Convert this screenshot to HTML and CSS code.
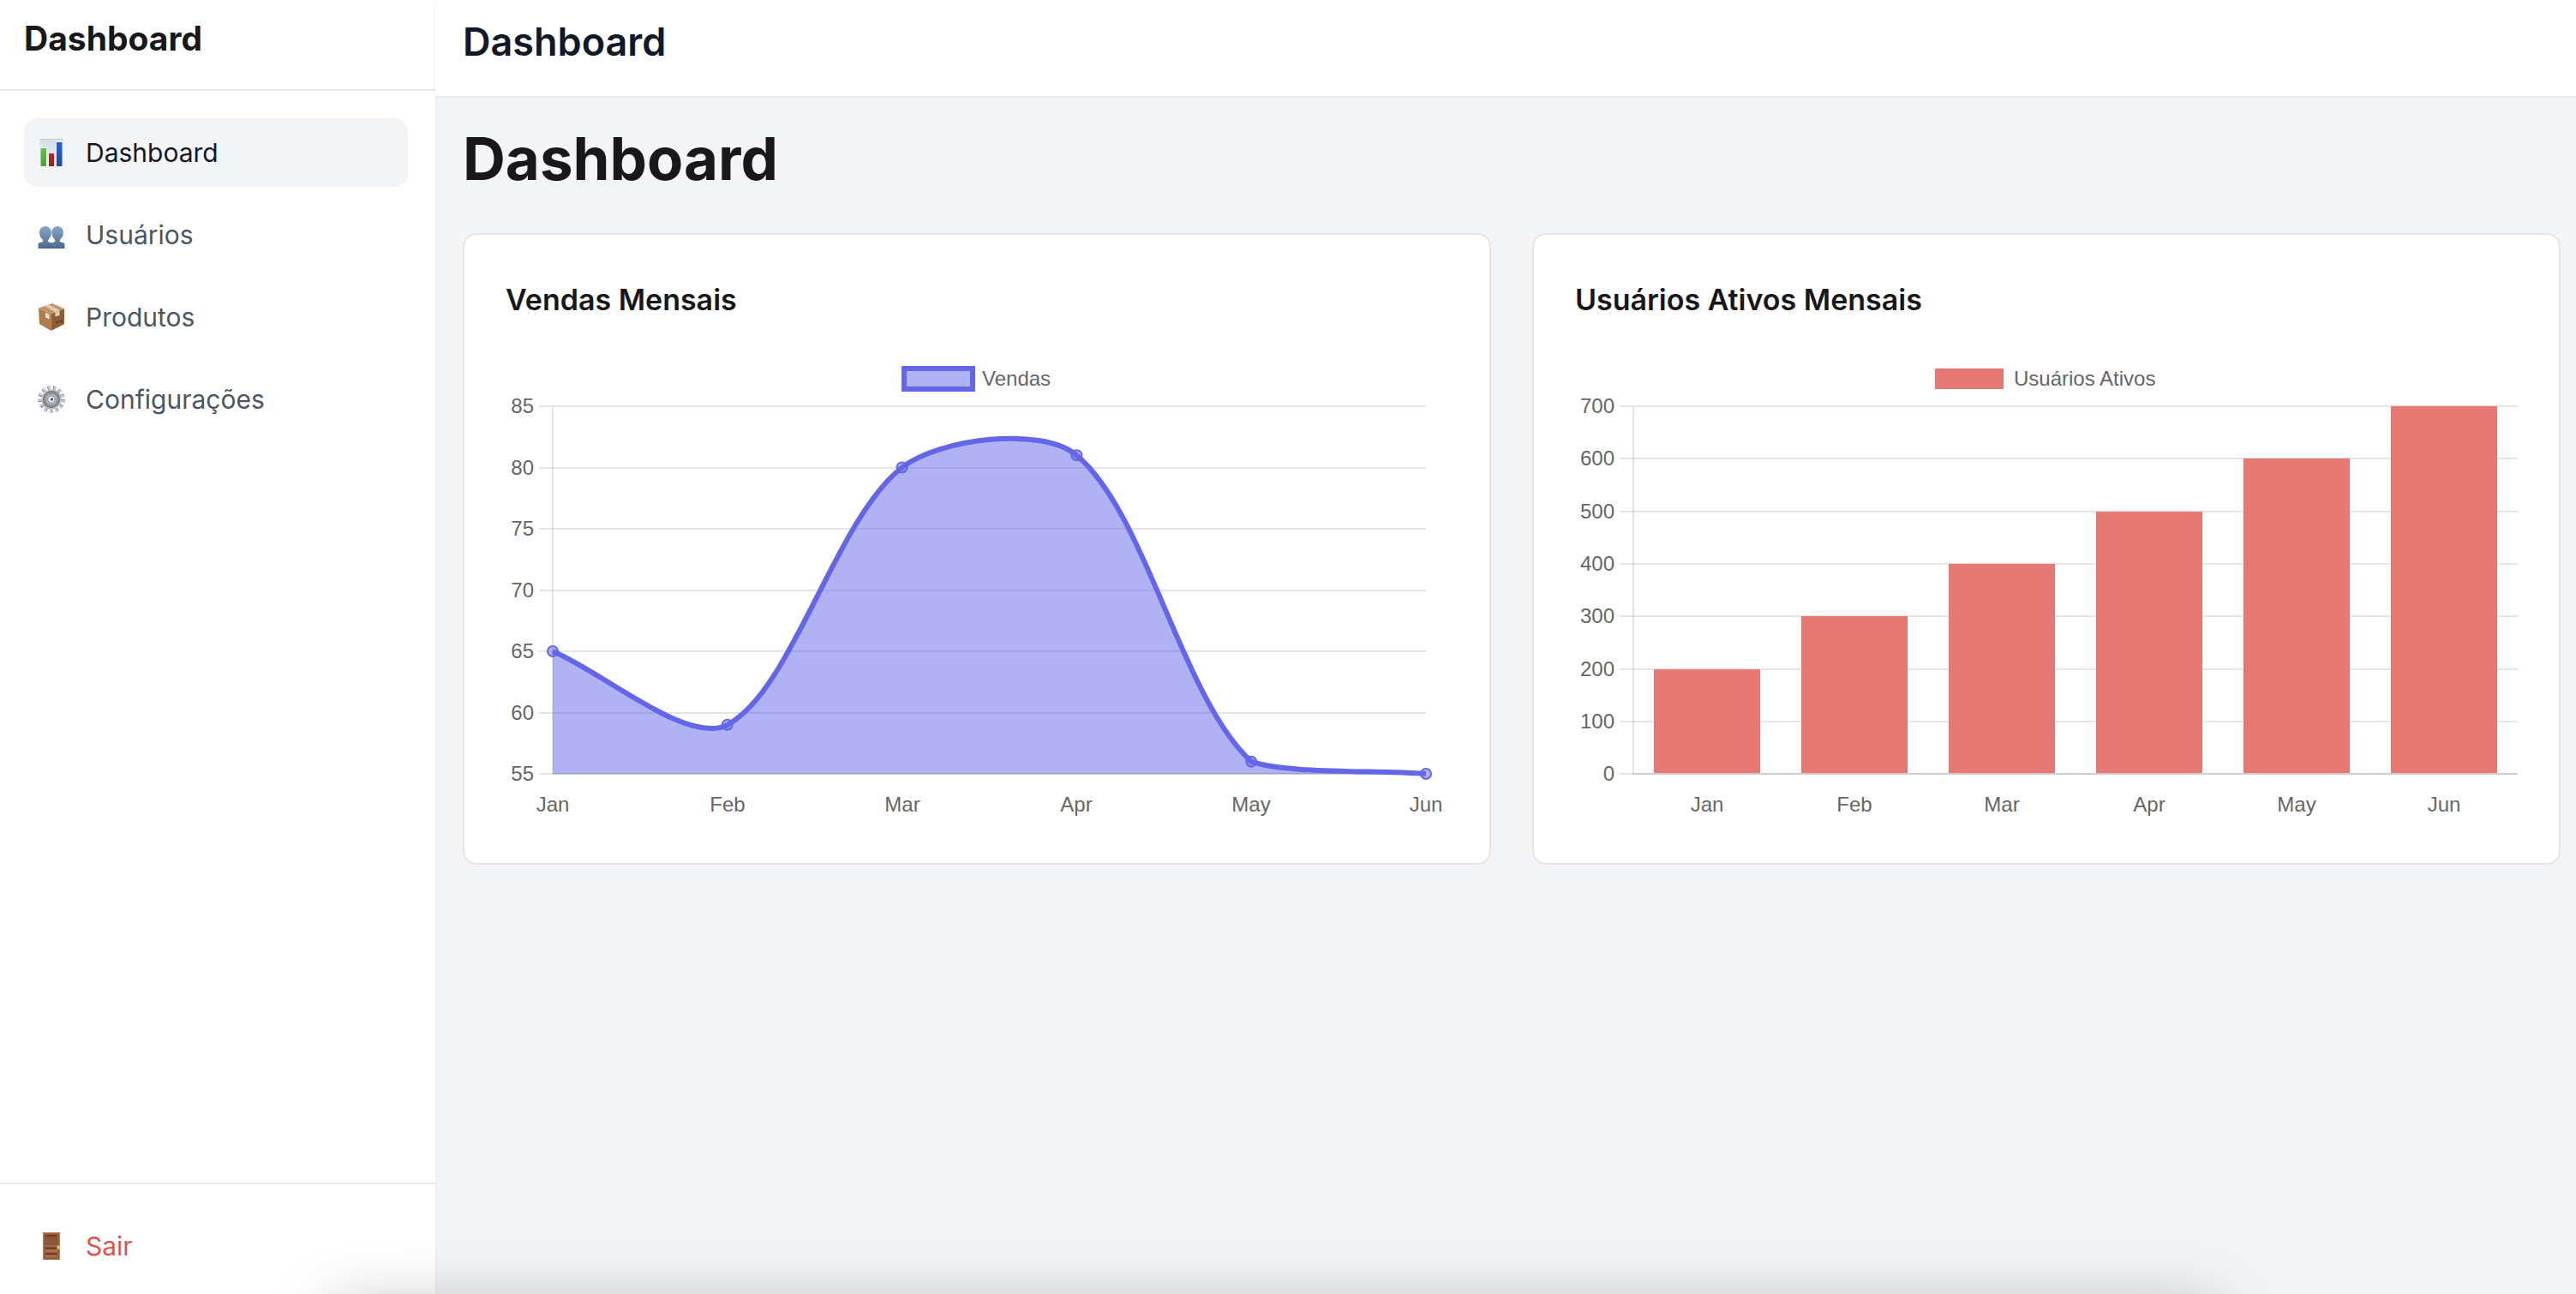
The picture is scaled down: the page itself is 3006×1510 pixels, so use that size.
FILE: index.html
```html
<!DOCTYPE html>
<html lang="pt-BR">
<head>
<meta charset="utf-8">
<meta name="viewport" content="width=device-width, initial-scale=1">
<title>Dashboard</title>
<link rel="stylesheet" href="styles.css">
</head>
<body>
<div class="layout">
  <aside class="sidebar">
    <div class="brand">Dashboard</div>
    <nav class="nav">
      <a class="nav-item active" href="#dashboard" aria-current="page">
        <svg class="icon" viewBox="0 0 32 32" aria-hidden="true">
          <defs>
            <linearGradient id="paper" x1="0" y1="0" x2="0" y2="1"><stop offset="0" stop-color="#d3dfe8"/><stop offset="1" stop-color="#eaf0f5"/></linearGradient>
            <linearGradient id="green" x1="0" y1="0" x2="0" y2="1"><stop offset="0" stop-color="#5bc540"/><stop offset="1" stop-color="#4aa233"/></linearGradient>
            <linearGradient id="red" x1="0" y1="0" x2="0" y2="1"><stop offset="0" stop-color="#bf2a20"/><stop offset="1" stop-color="#9c1c14"/></linearGradient>
            <linearGradient id="blue" x1="0" y1="0" x2="0" y2="1"><stop offset="0" stop-color="#2460cf"/><stop offset="1" stop-color="#204c9c"/></linearGradient>
          </defs>
          <rect x="2.500" y="0" width="27" height="32" fill="url(#paper)"/>
          <path d="M2.500 .5h27" stroke="#c6d1da"/>
          <path d="M2.500 10h8.500v22H2.500zM12 16h8v16h-8zM21 2.500h8.500V32H21z" fill="#f3f6f9"/>
          <rect x="3.500" y="11" width="6.500" height="21" fill="url(#green)"/>
          <rect x="13" y="17" width="6" height="15" fill="url(#red)"/>
          <rect x="22" y="4" width="6.500" height="28" fill="url(#blue)"/>
        </svg>
        <span>Dashboard</span>
      </a>
      <a class="nav-item" href="#usuarios">
        <svg class="icon" viewBox="0 0 32 32" aria-hidden="true">
          <defs><linearGradient id="people" x1="0" y1="6" x2="0" y2="32" gradientUnits="userSpaceOnUse"><stop offset="0" stop-color="#86a7c6"/><stop offset="1" stop-color="#4a688d"/></linearGradient></defs>
          <path fill="url(#people)" d="M.5 32v-4.500c0-1.400.8-2 2.300-2.400 2-.5 3.400-.9 3.500-2.100 0-.9-.7-1.500-1.700-2.800C3.200 19.300 2.300 17 2 14.600 1.500 9.500 4.500 6 9 6s7.300 3.500 6.900 8.600c-.2 2.400-1.200 4.700-2.500 5.600-.8 1.300-1.400 1.900-1.400 2.800.1 1.200 1.200 1.600 3 2.100 1.700.5 3 1 4 2.400l2 4.500z"/>
          <path fill="url(#people)" d="M31.500 32v-4.500c0-1.400-.8-2-2.300-2.400-2-.5-3.400-.9-3.500-2.100 0-.9.700-1.500 1.500-2.800 1.300-.9 2.400-3.200 2.700-5.600C30.500 9.500 27.500 6 23.200 6s-7.300 3.500-6.700 8.600c.2 2.400 1.200 4.700 2.500 5.600.8 1.300 1.400 1.900 1.400 2.800-.1 1.200-1.200 1.600-3 2.100-.6.2-1.300.4-1.900.8L20 32z"/>
          <path d="M16 26.200c2.300.6 4 1.700 5 4.300" fill="none" stroke="#7897b5" stroke-width=".8"/>
        </svg>
        <span>Usuários</span>
      </a>
      <a class="nav-item" href="#produtos">
        <svg class="icon" viewBox="0 0 32 32" aria-hidden="true">
          <path fill="#c39665" d="M17 0 31 6.200 15.500 12.500 1 5.500z"/>
          <path fill="#b17c49" d="M1 5.500l14.500 7V32L2 24z"/>
          <path fill="#8c5f34" d="M15.500 12.500 31 6.200v18L15.500 32z"/>
          <path fill="#e5d5bd" d="M8.500 3 12.500 1.400 25.500 8v6l-5 1.500v-5.200z"/>
          <path stroke="#c7b092" stroke-width=".7" fill="none" d="M10.500 2.200 23 9v5.500M20.500 10.400 25.500 8.400"/>
          <path fill="#ece9e3" d="M9 11l4.500 2v5.500L9 16.300z"/>
          <path fill="#c2beb6" d="M10 13.500l2.500 1.100v1L10 14.500z"/>
          <path fill="#4b3018" d="M21 21.500l4-1.600-1.200 3.400-1.200.8zM26 20.200l3-1.200v2.800l-3 1.200z" opacity=".65"/>
        </svg>
        <span>Produtos</span>
      </a>
      <a class="nav-item" href="#configuracoes">
        <svg class="icon" viewBox="0 0 32 32" aria-hidden="true">
          <defs><linearGradient id="steel" x1="0" y1="0" x2="1" y2="1"><stop offset="0" stop-color="#d3d9e0"/><stop offset=".5" stop-color="#a3aab2"/><stop offset="1" stop-color="#cdd2d8"/></linearGradient></defs>
          <circle cx="16" cy="16" r="13.400" fill="none" stroke="#6c6a6c" stroke-width="4.500" stroke-dasharray="3 3.476"/>
          <circle cx="16" cy="16" r="13.600" fill="none" stroke="#c3cad3" stroke-width="4.800" stroke-dasharray="3 3.573" stroke-dashoffset="-.7"/>
          <circle cx="16" cy="16" r="11.600" fill="url(#steel)"/>
          <circle cx="16" cy="16" r="9.400" fill="#8f9498" stroke="#74787c" stroke-width="1.200"/>
          <circle cx="16" cy="16" r="7" fill="#b1b7bc" stroke="#868b8f"/>
          <circle cx="16" cy="16" r="4.200" fill="#f0f3f5" stroke="#7d8286"/>
          <circle cx="16.500" cy="16" r="1.700" fill="#55504e"/>
        </svg>
        <span>Configurações</span>
      </a>
    </nav>
    <div class="sidebar-footer">
      <button class="nav-item logout" type="button">
        <svg class="icon" viewBox="0 0 32 32" aria-hidden="true">
          <rect x="6" y="0" width="20" height="32" fill="#b08468"/>
          <rect x="7" y="1" width="18" height="31" fill="#97603f"/>
          <path fill="#8c5839" stroke="#7c4c30" stroke-width=".8" d="M9 4h13.500v11H9z"/>
          <path fill="#6d3f26" d="M9 3h13.500v2H9zM9 17.500h13.500V20H9zM9 24h13.500v2H9z"/>
          <path fill="#a96f4e" d="M9 15h13.500v1.500H9zM9 20h13.500v3H9zM9 27h13.500v2H9z"/>
          <rect x="22.500" y="15.500" width="3.500" height="4.500" fill="#d9b13a"/>
          <path fill="#f3dc74" d="M23 16h2v1.500h-2z"/>
        </svg>
        <span>Sair</span>
      </button>
    </div>
  </aside>

  <div class="content">
    <header class="topbar">
      <h2 class="topbar-title">Dashboard</h2>
    </header>
    <main class="main">
      <h1 class="page-title">Dashboard</h1>
      <div class="cards">
        <section class="card">
          <h3 class="card-title">Vendas Mensais</h3>
          <svg class="chart" viewBox="0 0 1100 550" role="img" aria-label="Vendas por mês">
            <g class="grid">
              <path d="M39 65H1074M39 137H1074M39 208H1074M39 280H1074M39 351H1074M39 423H1074M39 494H1074"/>
              <path d="M55 66V493M54 494H1074"/>
            </g>
            <path class="area" d="M55 351C116.100 376.700 212.500 461.200 258.800 436.800C334.800 396.800 384.400 196.900 462.600 136.500C506.600 102.500 625.800 88.100 666.400 122.200C748.200 191 788.400 405.200 870.200 479.700C910.800 494 1012.900 489.700 1074 494H55z"/>
            <path class="line" d="M55 351C116.100 376.700 212.500 461.200 258.800 436.800C334.800 396.800 384.400 196.900 462.600 136.500C506.600 102.500 625.800 88.100 666.400 122.200C748.200 191 788.400 405.200 870.200 479.700C910.800 494 1012.900 489.700 1074 494"/>
            <g class="points">
              <circle cx="55" cy="351" r="6"/><circle cx="258.800" cy="436.800" r="6"/><circle cx="462.600" cy="136.500" r="6"/><circle cx="666.400" cy="122.200" r="6"/><circle cx="870.200" cy="479.700" r="6"/><circle cx="1074" cy="494" r="6"/>
            </g>
            <rect class="key-line" x="465" y="21" width="80" height="24"/>
            <text x="556" y="41">Vendas</text>
            <g class="ticks-y">
              <text x="33" y="73">85</text><text x="33" y="145">80</text><text x="33" y="216">75</text><text x="33" y="288">70</text><text x="33" y="359">65</text><text x="33" y="431">60</text><text x="33" y="502">55</text>
            </g>
            <g class="ticks-x">
              <text x="55" y="538">Jan</text><text x="259" y="538">Feb</text><text x="463" y="538">Mar</text><text x="666" y="538">Apr</text><text x="870" y="538">May</text><text x="1074" y="538">Jun</text>
            </g>
          </svg>
        </section>
        <section class="card">
          <h3 class="card-title">Usuários Ativos Mensais</h3>
          <svg class="chart" viewBox="0 0 1100 550" role="img" aria-label="Usuários ativos por mês">
            <g class="grid">
              <path d="M52 65H1100M52 126H1100M52 188H1100M52 249H1100M52 310H1100M52 372H1100M52 433H1100M52 494H1100"/>
              <path d="M68 66V493M67 494H1100"/>
            </g>
            <g class="bars">
              <rect x="92" y="372" width="124" height="121"/>
              <rect x="264" y="310" width="124" height="183"/>
              <rect x="436" y="249" width="124" height="244"/>
              <rect x="608" y="188" width="124" height="305"/>
              <rect x="780" y="126" width="124" height="367"/>
              <rect x="952" y="65" width="124" height="428"/>
              <rect x="420" y="21" width="80" height="24"/>
            </g>
            <text x="512" y="41">Usuários Ativos</text>
            <g class="ticks-y">
              <text x="46" y="73">700</text><text x="46" y="134">600</text><text x="46" y="196">500</text><text x="46" y="257">400</text><text x="46" y="318">300</text><text x="46" y="380">200</text><text x="46" y="441">100</text><text x="46" y="502">0</text>
            </g>
            <g class="ticks-x">
              <text x="154" y="538">Jan</text><text x="326" y="538">Feb</text><text x="498" y="538">Mar</text><text x="670" y="538">Apr</text><text x="842" y="538">May</text><text x="1014" y="538">Jun</text>
            </g>
          </svg>
        </section>
      </div>
    </main>
  </div>
</div>
<div class="dock-shadow"></div>
</body>
</html>
```
FILE: styles.css
```css
* { box-sizing: border-box; }

body {
  margin: 0;
  background: #f3f4f6;
  color: #18181b;
  font-family: Inter, "Liberation Sans", sans-serif;
}

h1, h2, h3 { margin: 0; }

.layout {
  display: flex;
  min-height: 100vh;
}

/* Sidebar */
.sidebar {
  display: flex;
  flex-direction: column;
  flex: 0 0 508px;
  background: #fff;
  box-shadow: 0 2px 4px rgba(0, 0, 0, .06);
}

.brand {
  padding: 17px 28px 31px;
  border-bottom: 2px solid #e5e7eb;
  font-size: 39px;
  font-weight: 700;
  line-height: 56px;
}

.nav {
  display: flex;
  flex: 1;
  flex-direction: column;
  gap: 16px;
  padding: 32px 32px 32px 28px;
}

.nav-item {
  display: flex;
  align-items: center;
  gap: 24px;
  width: 100%;
  height: 80px;
  padding: 0 16px;
  border: 0;
  border-radius: 16px;
  background: none;
  color: #4b5563;
  font-family: inherit;
  font-size: 30px;
  line-height: 48px;
  text-decoration: none;
  cursor: pointer;
}

.nav-item.active {
  background: #f3f4f6;
  color: #111827;
}

.nav-item.logout { color: #e0524d; }

.icon {
  flex: none;
  width: 32px;
  height: 32px;
}

.sidebar-footer {
  padding: 32px 32px 16px 28px;
  border-top: 2px solid #e5e7eb;
}

/* Content */
.content {
  flex: 1;
  min-width: 0;
}

.topbar {
  padding: 17px 32px 31px;
  background: #fff;
  box-shadow: 0 2px 4px rgba(0, 0, 0, .06);
}

.topbar-title {
  color: #111827;
  font-size: 45px;
  font-weight: 600;
  line-height: 64px;
}

.main { padding: 32px 18px 32px 32px; }

.page-title {
  margin-bottom: 46px;
  font-size: 69px;
  font-weight: 700;
  line-height: 82px;
}

.cards {
  display: grid;
  grid-template-columns: repeat(2, minmax(0, 1fr));
  gap: 48px;
}

.card {
  padding: 48px;
  border: 2px solid #e4e4e7;
  border-radius: 16px;
  background: #fff;
}

.card-title {
  margin-bottom: 31px;
  font-size: 34px;
  font-weight: 600;
  line-height: 56px;
}

/* Charts */
.chart {
  display: block;
  width: 100%;
  height: auto;
  overflow: visible;
}

.chart text {
  fill: #666;
  font-family: "Liberation Sans", Arial, sans-serif;
  font-size: 24px;
}

.ticks-y { text-anchor: end; }
.ticks-x { text-anchor: middle; }

.grid {
  fill: none;
  stroke: rgba(0, 0, 0, .1);
  stroke-width: 2;
}

.area { fill: rgba(99, 102, 232, .5); }

.line {
  fill: none;
  stroke: #6366e8;
  stroke-width: 6;
}

.points {
  fill: rgba(99, 102, 232, .5);
  stroke: #6366e8;
  stroke-width: 2;
}

.key-line {
  fill: rgba(99, 102, 232, .5);
  stroke: #6366e8;
  stroke-width: 6;
}

.bars { fill: #e67973; }

/* Soft shadow rising from the bottom edge */
.dock-shadow {
  position: fixed;
  right: 14%;
  bottom: -220px;
  left: 13%;
  height: 200px;
  box-shadow: 0 0 80px rgba(0, 0, 0, .3);
  pointer-events: none;
}
```
